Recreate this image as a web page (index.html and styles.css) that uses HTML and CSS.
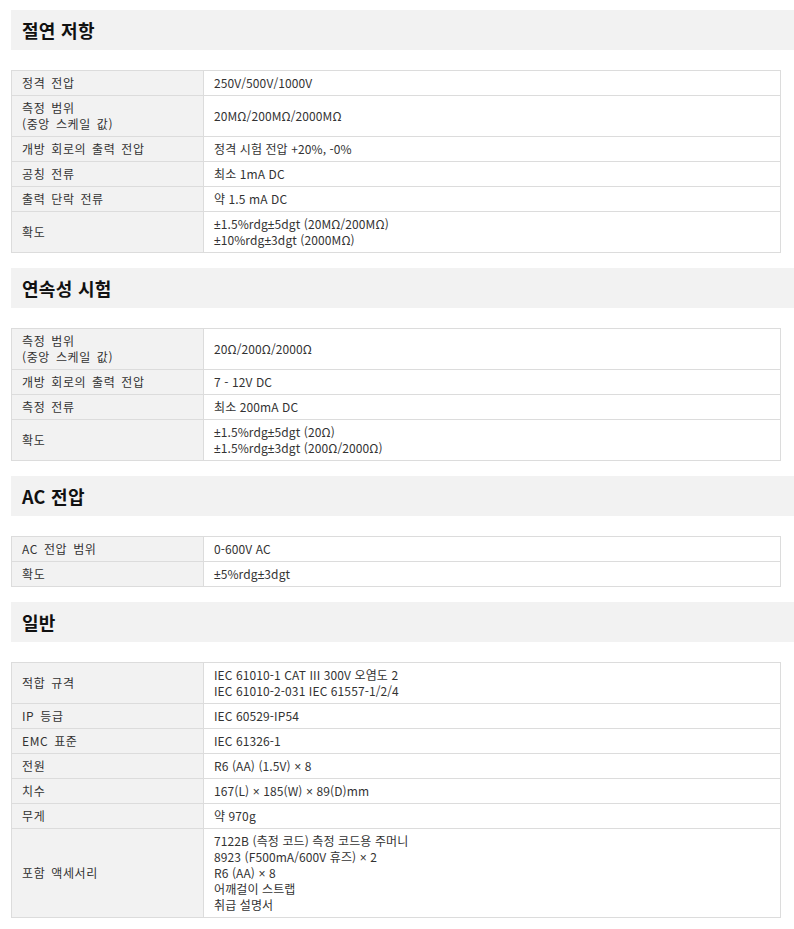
FILE: index.html
```html
<!DOCTYPE html>
<html lang="ko">
<head>
<meta charset="utf-8">
<link rel="stylesheet" href="styles.css">
</head>
<body>
<div class="page">
  <section class="sec">
    <h2 class="sec-title">절연 저항</h2>
    <table class="spec">
      <tr><th>정격 전압</th><td>250V/500V/1000V</td></tr>
      <tr><th>측정 범위<br>(중앙 스케일 값)</th><td>20MΩ/200MΩ/2000MΩ</td></tr>
      <tr><th>개방 회로의 출력 전압</th><td>정격 시험 전압 +20%, -0%</td></tr>
      <tr><th>공칭 전류</th><td>최소 1mA DC</td></tr>
      <tr><th>출력 단락 전류</th><td>약 1.5 mA DC</td></tr>
      <tr><th>확도</th><td><span class="sym">±</span>1.5%rdg<span class="sym">±</span>5dgt (20MΩ/200MΩ)<br><span class="sym">±</span>10%rdg<span class="sym">±</span>3dgt (2000MΩ)</td></tr>
    </table>
  </section>
  <section class="sec">
    <h2 class="sec-title">연속성 시험</h2>
    <table class="spec">
      <tr><th>측정 범위<br>(중앙 스케일 값)</th><td>20Ω/200Ω/2000Ω</td></tr>
      <tr><th>개방 회로의 출력 전압</th><td>7 - 12V DC</td></tr>
      <tr><th>측정 전류</th><td>최소 200mA DC</td></tr>
      <tr><th>확도</th><td><span class="sym">±</span>1.5%rdg<span class="sym">±</span>5dgt (20Ω)<br><span class="sym">±</span>1.5%rdg<span class="sym">±</span>3dgt (200Ω/2000Ω)</td></tr>
    </table>
  </section>
  <section class="sec">
    <h2 class="sec-title">AC 전압</h2>
    <table class="spec">
      <tr><th>AC 전압 범위</th><td>0-600V AC</td></tr>
      <tr><th>확도</th><td><span class="sym">±</span>5%rdg<span class="sym">±</span>3dgt</td></tr>
    </table>
  </section>
  <section class="sec">
    <h2 class="sec-title">일반</h2>
    <table class="spec">
      <tr><th>적합 규격</th><td>IEC 61010-1 CAT III 300V 오염도 2<br>IEC 61010-2-031 IEC 61557-1/2/4</td></tr>
      <tr><th>IP 등급</th><td>IEC 60529-IP54</td></tr>
      <tr><th>EMC 표준</th><td>IEC 61326-1</td></tr>
      <tr><th>전원</th><td>R6 (AA) (1.5V) <span class="sym">×</span> 8</td></tr>
      <tr><th>치수</th><td>167(L) <span class="sym">×</span> 185(W) <span class="sym">×</span> 89(D)mm</td></tr>
      <tr><th>무게</th><td>약 970g</td></tr>
      <tr><th>포함 액세서리</th><td>7122B (측정 코드) 측정 코드용 주머니<br>8923 (F500mA/600V 휴즈) <span class="sym">×</span> 2<br>R6 (AA) <span class="sym">×</span> 8<br>어깨걸이 스트랩<br>취급 설명서</td></tr>
    </table>
  </section>
</div>
</body>
</html>
```
FILE: styles.css
```css
html, body {
  margin: 0;
  padding: 0;
  background: #fff;
}
body {
  font-family: "Noto Sans CJK KR", "Noto Sans", sans-serif;
  color: #333;
  overflow: hidden;
}
.page {
  padding: 10px 0 0 11px;
}
.sec {
  margin-bottom: 15px;
}
.sec-title {
  margin: 0 0 20px 0;
  width: 783px;
  height: 40px;
  box-sizing: border-box;
  padding-left: 11px;
  background: #f2f2f2;
  font-size: 18px;
  font-weight: 700;
  line-height: 40px;
  color: #111;
  letter-spacing: 0.3px;
}
.spec {
  width: 770px;
  border-collapse: collapse;
  border: 1px solid #dcdcdc;
  font-size: 12px;
  line-height: 16px;
}
.spec th,
.spec td {
  border: 1px solid #dcdcdc;
  padding: 4px 10px;
  text-align: left;
  vertical-align: middle;
  font-weight: 400;
}
.spec th {
  width: 171px;
  background: #f2f2f2;
  color: #333;
  letter-spacing: 0.6px;
  word-spacing: 2px;
}
.spec td {
  color: #333;
  letter-spacing: 0.1px;
}
.sym {
  font-family: "Liberation Sans", "DejaVu Sans", sans-serif;
  line-height: 1;
}
```
